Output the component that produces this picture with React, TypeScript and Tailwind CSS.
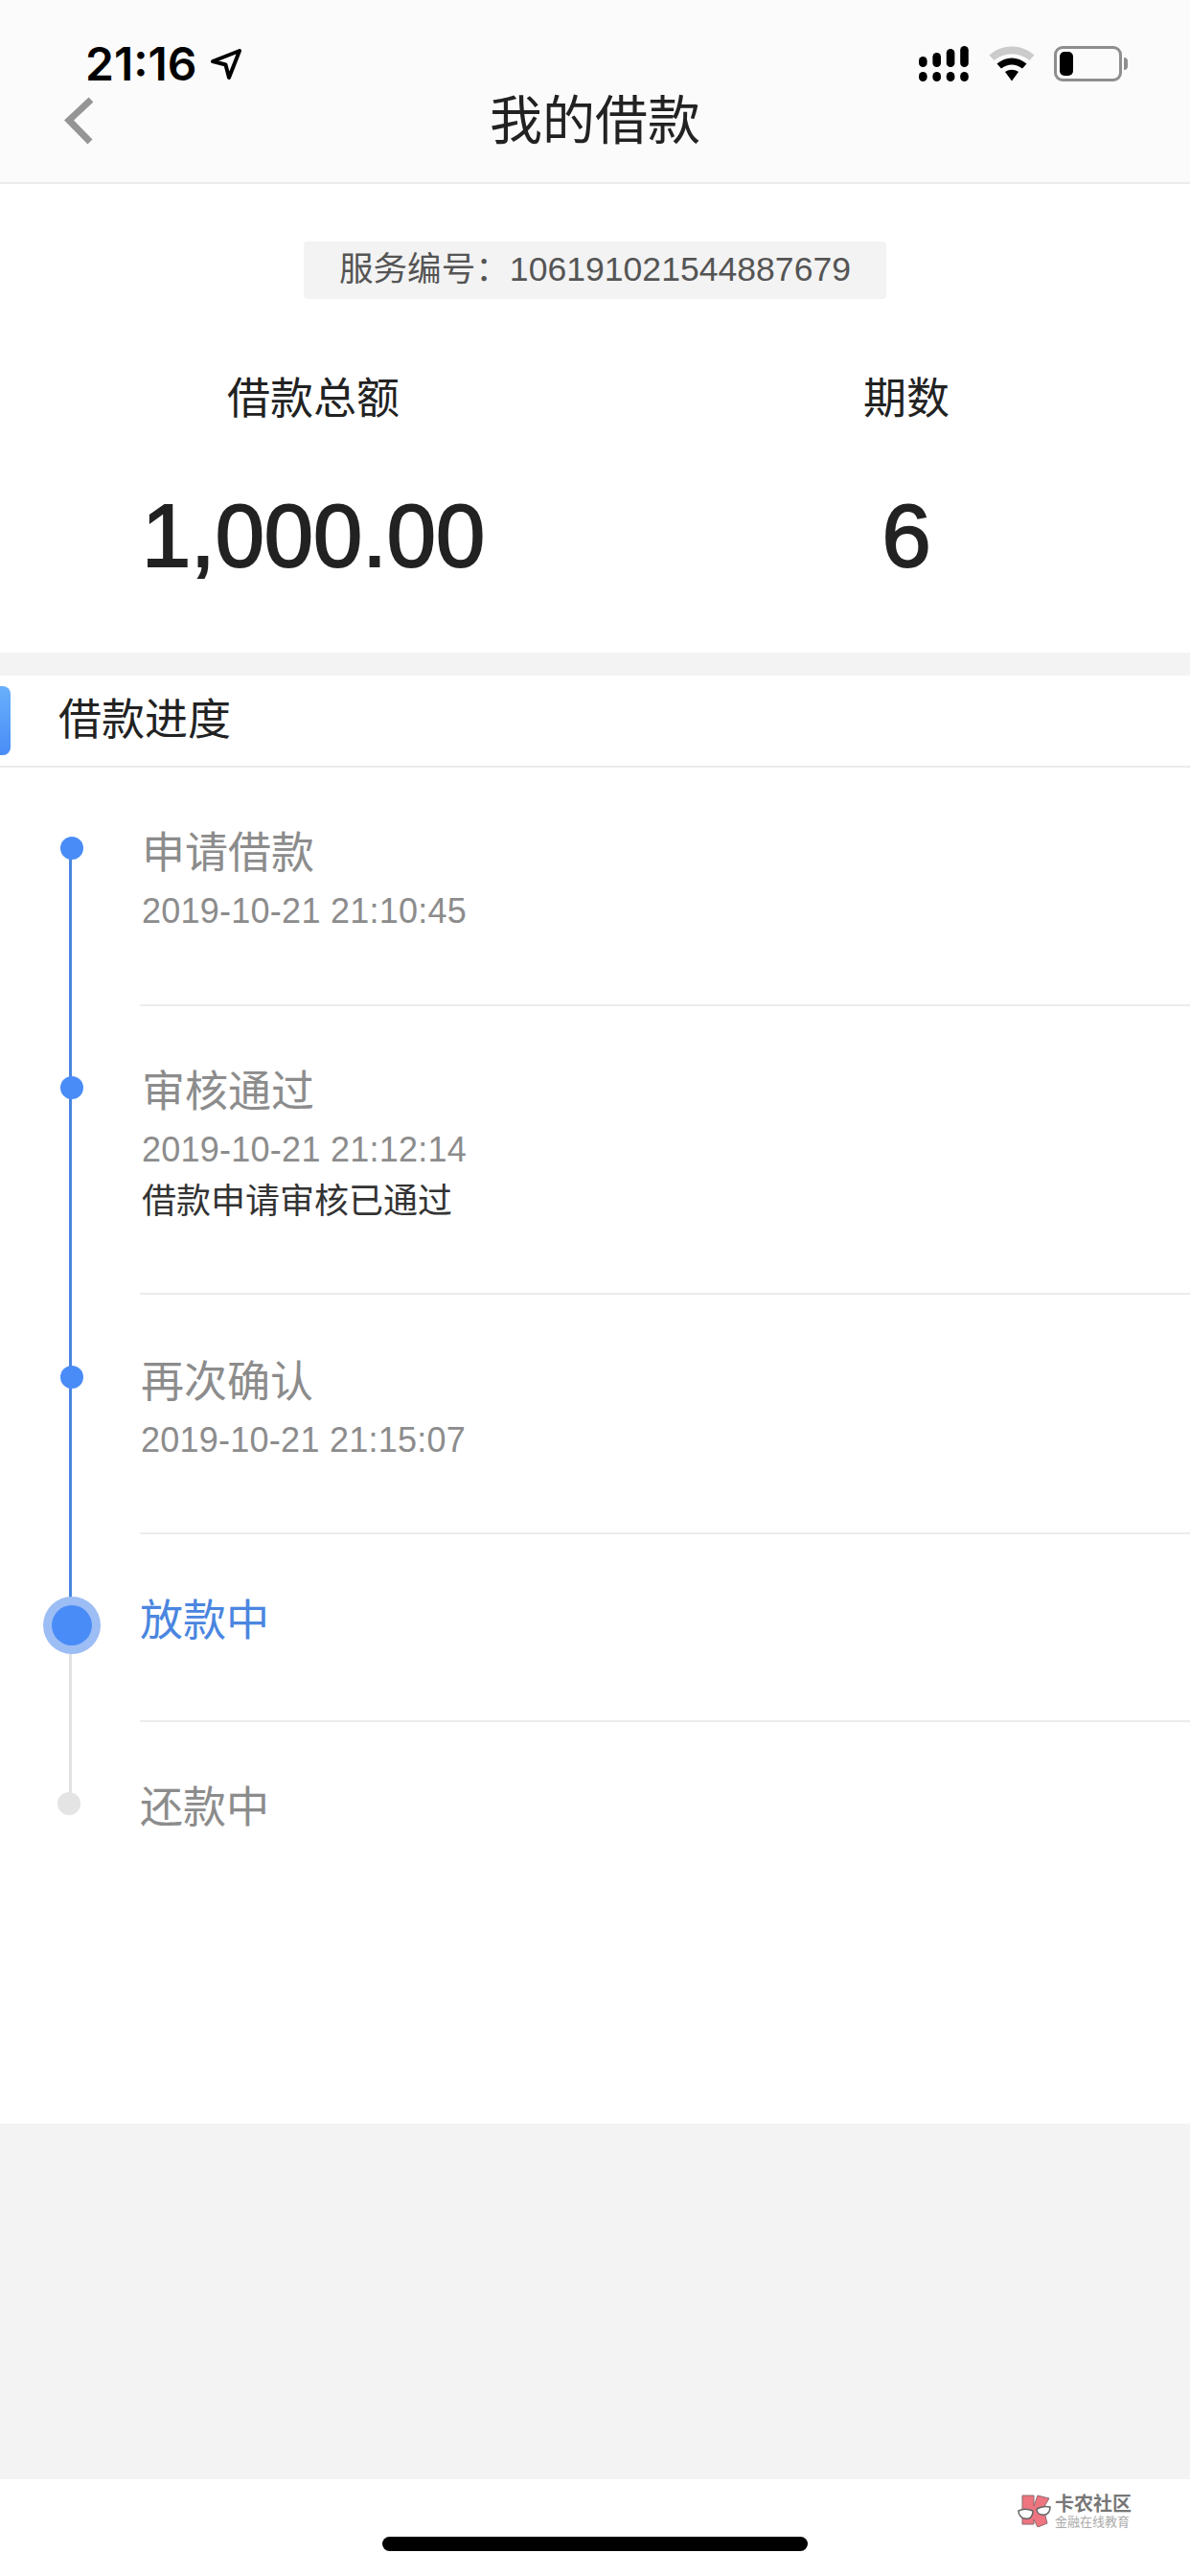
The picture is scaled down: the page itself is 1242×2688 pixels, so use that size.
import React from "react";

type Step = {
  title: string;
  date?: string;
  note?: string;
  height: string;
  dotTop: string;
  pad: string;
  titleColor: string;
  divider: boolean;
  dot: "done" | "active" | "todo";
  lineAbove?: string;
  lineBelow?: string;
};

const steps: Step[] = [
  { title: "申请借款", date: "2019-10-21 21:10:45", height: "h-[249px]", dotTop: "top-[72px]", pad: "pt-[60px] pl-[2px]", titleColor: "text-[#8c8c8c]", divider: true, dot: "done", lineBelow: "bg-[#4a86e0]" },
  { title: "审核通过", date: "2019-10-21 21:12:14", note: "借款申请审核已通过", height: "h-[301px]", dotTop: "top-[73px]", pad: "pt-[60px] pl-[2px]", titleColor: "text-[#8c8c8c]", divider: true, dot: "done", lineAbove: "bg-[#4a86e0]", lineBelow: "bg-[#4a86e0]" },
  { title: "再次确认", date: "2019-10-21 21:15:07", height: "h-[250px]", dotTop: "top-[74px]", pad: "pt-[62px] pl-[1px]", titleColor: "text-[#8c8c8c]", divider: true, dot: "done", lineAbove: "bg-[#4a86e0]", lineBelow: "bg-[#4a86e0]" },
  { title: "放款中", height: "h-[196px]", dotTop: "top-[65px]", pad: "pt-[61px]", titleColor: "text-[#4a86e0]", divider: true, dot: "active", lineAbove: "bg-[#4a86e0]", lineBelow: "bg-[#e2e2e2]" },
  { title: "还款中", height: "h-[419px]", dotTop: "top-[73px]", pad: "pt-[60px]", titleColor: "text-[#8c8c8c]", divider: false, dot: "todo", lineAbove: "bg-[#e2e2e2]" },
];

function Signal() {
  const tops = [11, 7, 3, 0];
  return (
    <svg width="52" height="37" viewBox="0 0 52 37" fill="#000">
      {tops.map((t, i) => (
        <g key={i}>
          <rect x={i * 14.4} y={t} width="8.6" height={22 - t} rx="4.3" />
          <rect x={i * 14.4} y="27" width="8.6" height="10" rx="4.3" />
        </g>
      ))}
    </svg>
  );
}

function Wifi() {
  return (
    <svg width="48" height="37" viewBox="0 0 48 37">
      <path d="M0.5 9.5 C14 -2.5 34 -2.5 47.5 9.5 L42.5 15 C31 6 17 6 5.5 15 Z" fill="#cbcbcb" />
      <path d="M8.5 18.5 C18 10.5 30 10.5 39.5 18.5 L35 23.5 C27.5 18 20.5 18 13 23.5 Z" fill="#000" />
      <path d="M17 27 L24 36.5 L31 27 C26.5 24 21.5 24 17 27 Z" fill="#000" />
    </svg>
  );
}

function Battery() {
  return (
    <div className="flex items-center">
      <div className="w-[71px] h-[37px] rounded-[9px] border-[3px] border-[#8e8e8e] p-[3px]">
        <div className="w-[14px] h-full rounded-[5px] bg-black" />
      </div>
      <div className="w-[4px] h-[13px] ml-[2px] rounded-r-[4px] bg-[#8e8e8e]" />
    </div>
  );
}

function Logo() {
  return (
    <svg width="38" height="34" viewBox="0 0 38 34">
      <path d="M5 1 H17 V12 L21 1 L33 4 L27 14 L31 30 L21 34 L17 26 V31 H5 Z" fill="#ee7480" stroke="#8b6b6e" strokeWidth="1" />
      <path d="M1 17 C5 15 11 15 16 17 C16 22 14 26 8 25 C4 25 1 21 1 17 Z" fill="#fff" stroke="#666" strokeWidth="1.5" />
      <path d="M20 15 C25 12 30 12 34 13 C34 19 30 22 26 21 C23 21 20 19 20 15 Z" fill="#fff" stroke="#666" strokeWidth="1.5" />
    </svg>
  );
}

function Row({ s }: { s: Step }) {
  return (
    <div className={`relative ${s.height}`}>
      {s.lineAbove && <div className={`absolute left-[72px] top-0 w-[3px] h-[95px] ${s.lineAbove}`} />}
      {s.lineBelow && <div className={`absolute left-[72px] top-[85px] bottom-0 w-[3px] ${s.lineBelow}`} />}
      {s.dot === "done" && <div className={`absolute left-[63px] ${s.dotTop} w-[24px] h-[24px] rounded-full bg-[#4a8cf7]`} />}
      {s.dot === "todo" && <div className={`absolute left-[60px] ${s.dotTop} w-[24px] h-[24px] rounded-full bg-[#e4e4e4]`} />}
      {s.dot === "active" && (
        <div className={`absolute left-[45px] ${s.dotTop} w-[60px] h-[60px] rounded-full bg-[#9dbdf5] flex items-center justify-center`}>
          <div className="w-[42px] h-[42px] rounded-full bg-[#4a8cf7]" />
        </div>
      )}
      <div className={`ml-[146px] h-full ${s.pad} ${s.divider ? "border-b-2 border-[#ececec]" : ""}`}>
        <div className={`h-[60px] leading-[60px] text-[45px] ${s.titleColor}`}>{s.title}</div>
        {s.date && <div className="mt-[6px] h-[48px] leading-[48px] text-[36px] tracking-[0.25px] text-[#8c8c8c]">{s.date}</div>}
        {s.note && <div className="h-[60px] leading-[60px] text-[36px] text-[#333]">{s.note}</div>}
      </div>
    </div>
  );
}

export default function App() {
  return (
    <div className="relative w-[1242px] h-[2688px] bg-white overflow-hidden flex flex-col font-['Liberation_Sans','Noto_Sans_CJK_SC',sans-serif]">
      <header className="h-[192px] shrink-0 bg-[#fbfbfb] border-b-2 border-[#ececec] pt-[48px]">
        <div className="h-[37px] flex items-center pl-[89px] pr-[65px]">
          <span className="font-['Inter',sans-serif] font-semibold text-[48px] leading-[37px] text-black">21:16</span>
          <svg className="ml-[14px]" width="32" height="32" viewBox="0 0 32 32" fill="none" stroke="#000" strokeWidth="4" strokeLinejoin="round">
            <path d="M2 13 L30 2 L19 30 L15.5 16.5 Z" />
          </svg>
          <div className="ml-auto flex items-center">
            <Signal />
            <div className="ml-[21px]"><Wifi /></div>
            <div className="ml-[20px]"><Battery /></div>
          </div>
        </div>
        <div className="h-[82px] grid grid-cols-[1fr_auto_1fr] items-center">
          <div className="pl-[66px]">
            <svg width="34" height="50" viewBox="0 0 34 50" fill="none" stroke="#959595" strokeWidth="7">
              <path d="M29 3 L6 24.5 L28 47" />
            </svg>
          </div>
          <div className="text-[55px] leading-[82px] text-[#222]">我的借款</div>
          <div />
        </div>
      </header>

      <section className="h-[489px] shrink-0 pt-[60px]">
        <div className="mx-auto w-[608px] h-[60px] rounded-[4px] bg-[#f3f3f3] flex items-center justify-center text-[35.6px] text-[#555]">
          服务编号：106191021544887679
        </div>
        <div className="mt-[75px] flex text-[#222] text-center">
          <div className="w-[654px]">
            <div className="h-[60px] leading-[60px] text-[45px]">借款总额</div>
            <div className="mt-[62px] h-[100px] leading-[100px] text-[92px] [-webkit-text-stroke:2px_#222]">1,000.00</div>
          </div>
          <div className="w-[584px]">
            <div className="h-[60px] leading-[60px] text-[45px]">期数</div>
            <div className="mt-[62px] h-[100px] leading-[100px] text-[92px] [-webkit-text-stroke:2px_#222]">6</div>
          </div>
        </div>
      </section>

      <div className="h-[24px] shrink-0 bg-[#f3f3f3]" />

      <div className="h-[96px] shrink-0 flex items-center border-b-2 border-[#ececec] text-[45px] text-[#222]">
        <div className="w-[11px] h-[72px] rounded-r-[8px] bg-gradient-to-b from-[#69b0fc] to-[#4a8cf7]" />
        <span className="ml-[50px]">借款进度</span>
      </div>

      <div className="shrink-0">
        {steps.map((s) => (
          <Row key={s.title} s={s} />
        ))}
      </div>

      <div className="h-[371px] shrink-0 bg-[#f3f3f3]" />

      <footer className="flex-1 relative bg-white">
        <div className="pt-[16px] pl-[1062px] flex items-start">
          <Logo />
          <div className="ml-[1px] w-[80px]">
            <div className="h-[20px] leading-[20px] text-[20px] font-bold text-[#777] whitespace-nowrap">卡农社区</div>
            <div className="h-[14px] leading-[14px] mt-[2px] text-[13px] text-[#aaa] whitespace-nowrap">金融在线教育</div>
          </div>
        </div>
        <div className="absolute left-[399px] bottom-[26px] w-[444px] h-[15px] rounded-full bg-black" />
      </footer>
    </div>
  );
}
